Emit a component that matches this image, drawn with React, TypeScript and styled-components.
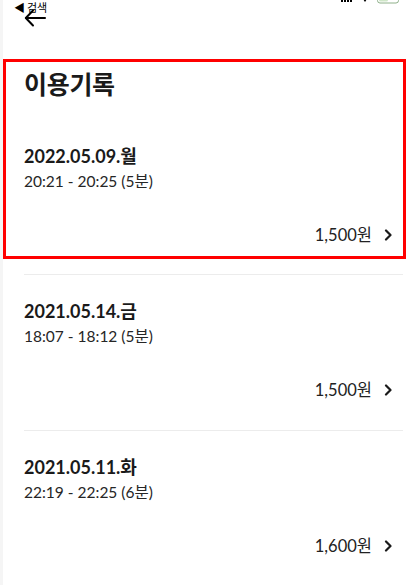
import React from "react";
import styled, { createGlobalStyle } from "styled-components";

const GlobalStyle = createGlobalStyle`
  html, body { margin: 0; padding: 0; }
  body {
    background: #f5f5f5;
    font-family: Lato, "Noto Sans CJK KR", "Noto Sans", sans-serif;
    color: #1c1c1e;
  }
`;

const Page = styled.div`
  margin-left: 3px;
  width: 414px;
  min-height: 585px;
  background: #ffffff;
  overflow: hidden;
`;

const Header = styled.header`
  position: relative;
  height: 59px;
`;

const StatusBar = styled.div`
  display: flex;
  align-items: flex-start;
  justify-content: space-between;
  height: 16px;
  padding: 1px 16px 0 11px;
  box-sizing: border-box;
`;

const StatusBack = styled.span`
  font-family: "Noto Sans CJK KR", sans-serif;
  font-size: 11px;
  line-height: 13px;
  color: #000;
  letter-spacing: -0.2px;
`;

const StatusIcons = styled.div`
  display: flex;
  align-items: flex-start;
  gap: 8px;
  margin-top: -2px;
`;

const BackButton = styled.button`
  position: absolute;
  left: 20px;
  top: 8px;
  width: 24px;
  height: 20px;
  padding: 0;
  border: none;
  background: transparent;
  display: flex;
  align-items: center;
  justify-content: center;
`;

const Highlight = styled.section`
  width: 403px;
  box-sizing: border-box;
  border: 3px solid #ff0000;
  padding: 0 0 9px 18px;
`;

const Title = styled.h1`
  margin: 4px 0 19px;
  font-family: "Noto Sans CJK KR", sans-serif;
  font-size: 25px;
  line-height: 34px;
  font-weight: 700;
  color: #1a1a1a;
  letter-spacing: -0.3px;
`;

const List = styled.div`
  padding: 0 14px 0 21px;
  margin-top: 15px;
`;

const Item = styled.div<{ $first?: boolean; $last?: boolean }>`
  display: flex;
  flex-direction: column;
  padding: ${(p) => (p.$first ? "26px 10px 0 0" : p.$last ? "0 10px 0 0" : "25px 10px 28px 0")};
  border-top: ${(p) => (p.$first ? "none" : "1px solid #ececec")};
`;

const DateText = styled.div`
  font-size: 18px;
  line-height: 22px;
  font-weight: 700;
  color: #1a1a1a;
`;

const TimeText = styled.div`
  margin-top: 2px;
  font-size: 15.5px;
  line-height: 24px;
  color: #262626;
`;

const PriceRow = styled.div`
  margin-top: 30px;
  display: flex;
  justify-content: flex-end;
  align-items: center;
  gap: 12px;
  font-size: 16.5px;
  line-height: 24px;
  color: #222;
`;

const Chevron = () => (
  <svg width="9" height="12" viewBox="0 0 9 12" fill="none">
    <path d="M2 1.5 L6.5 6 L2 10.5" stroke="#1a1a1a" strokeWidth="2.2" strokeLinecap="round" strokeLinejoin="round" />
  </svg>
);

type Record = { date: string; time: string; price: string };

const records: Record[] = [
  { date: "2022.05.09.월", time: "20:21 - 20:25 (5분)", price: "1,500원" },
  { date: "2021.05.14.금", time: "18:07 - 18:12 (5분)", price: "1,500원" },
  { date: "2021.05.11.화", time: "22:19 - 22:25 (6분)", price: "1,600원" },
];

const RecordItem = ({ r, first }: { r: Record; first?: boolean }) => (
  <Item $first={first}>
    <DateText>{r.date}</DateText>
    <TimeText>{r.time}</TimeText>
    <PriceRow>
      <span>{r.price}</span>
      <Chevron />
    </PriceRow>
  </Item>
);

export default function App() {
  const [first, ...rest] = records;
  return (
    <>
      <GlobalStyle />
      <Page>
        <Header>
          <StatusBar>
            <StatusBack>◀ 검색</StatusBack>
            <StatusIcons>
              <svg width="12" height="4" viewBox="0 0 12 4">
                <rect x="0" y="0" width="2" height="3" fill="#000" />
                <rect x="3" y="0" width="2" height="3" fill="#000" />
                <rect x="6" y="0" width="2" height="3" fill="#000" />
                <rect x="9" y="0" width="2" height="3" fill="#000" />
              </svg>
              <svg width="8" height="4" viewBox="0 0 8 4">
                <path d="M2 0 L4 3 L6 0 Z" fill="#000" />
              </svg>
              <svg width="24" height="5" viewBox="0 0 24 5">
                <rect x="0.5" y="-4" width="21" height="8" rx="2.5" fill="none" stroke="#8fb08a" strokeWidth="1" />
                <rect x="2" y="-4" width="9" height="6.5" rx="1.5" fill="#cfe6c8" />
              </svg>
            </StatusIcons>
          </StatusBar>
          <BackButton aria-label="뒤로">
            <svg width="22" height="18" viewBox="0 0 22 18" fill="none">
              <path d="M21 9 H2" stroke="#000" strokeWidth="2" strokeLinecap="round" />
              <path d="M9 1.5 L1.8 9 L9 16.5" stroke="#000" strokeWidth="2" strokeLinecap="round" strokeLinejoin="round" />
            </svg>
          </BackButton>
        </Header>
        <Highlight>
          <Title>이용기록</Title>
          <RecordItem r={first} first />
        </Highlight>
        <List>
          {rest.map((r) => (
            <RecordItem key={r.date} r={r} />
          ))}
          <Item $last />
        </List>
      </Page>
    </>
  );
}
